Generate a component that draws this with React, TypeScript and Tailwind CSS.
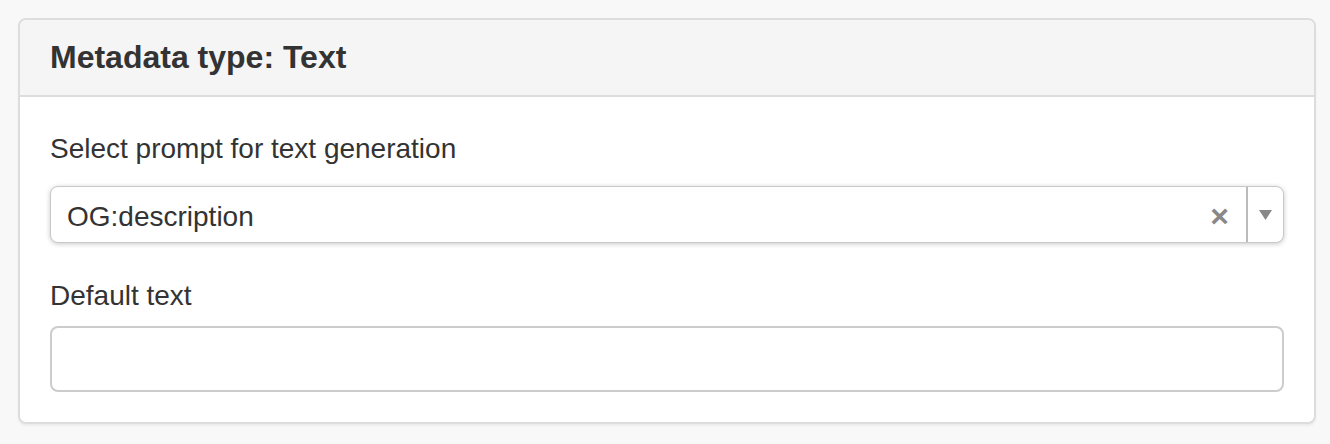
export default function App() {
  return (
    <div className="min-h-[444px] bg-[#f8f8f8] pt-[18px] font-['Liberation_Sans',Arial,sans-serif] text-[#333]">
      <div className="ml-[18px] w-[1298px] overflow-hidden rounded-[8px] border-2 border-[#ddd] bg-white shadow-[0_2px_2px_rgba(0,0,0,0.05)]">
        <div className="border-b-2 border-[#ddd] bg-[#f5f5f5] px-[30px] py-[20px]">
          <h3 className="text-[32px] leading-[35px] font-bold">Metadata type: Text</h3>
        </div>
        <div className="px-[30px] pt-[32px] pb-[30px]">
          <label className="block text-[28px] leading-[40px]">Select prompt for text generation</label>
          <div className="mt-[17px] flex h-[57px] items-center rounded-[8px] border border-[#c8c8c8] bg-white shadow-[0_1px_5px_rgba(0,0,0,0.22)]">
            <span className="flex-1 pt-[4px] pl-[16px] text-[28px] leading-[40px]">OG:description</span>
            <span className="mr-[17px] pt-[2px] text-[32px] leading-none font-bold text-[#888]">×</span>
            <span className="h-full w-[2px] bg-[#bbb]" />
            <span className="flex w-[35px] justify-center">
              <svg width="13" height="10" viewBox="0 0 13 10">
                <path d="M0 0 L13 0 L6.5 10 Z" fill="#888" />
              </svg>
            </span>
          </div>
          <label className="mt-[33px] block text-[28px] leading-[40px]">Default text</label>
          <input
            type="text"
            className="mt-[10px] block h-[66px] w-full rounded-[8px] border-2 border-[#ccc] bg-white px-[24px] text-[28px] outline-none"
          />
        </div>
      </div>
    </div>
  )
}
